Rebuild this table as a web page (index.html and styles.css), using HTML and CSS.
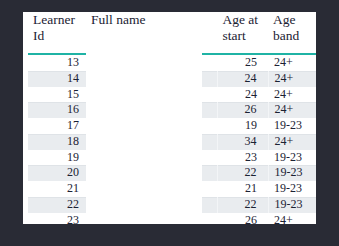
FILE: index.html
```html
<!DOCTYPE html>
<html>
<head>
<meta charset="utf-8">
<link rel="stylesheet" href="styles.css">
</head>
<body>
<div class="panel">
  <table class="grid">
    <colgroup>
      <col class="c-id"><col class="c-name"><col class="c-gap"><col class="c-age"><col class="c-band">
    </colgroup>
    <thead>
      <tr>
        <th class="h">Learner Id</th>
        <th class="h plain">Full name</th>
        <th class="h gap"></th>
        <th class="h">Age at start</th>
        <th class="h">Age band</th>
      </tr>
    </thead>
    <tbody>
      <tr><td class="id">13</td><td class="plain"></td><td class="gap"></td><td class="age">25</td><td class="band">24+</td></tr>
      <tr class="alt"><td class="id">14</td><td class="plain"></td><td class="gap"></td><td class="age">24</td><td class="band">24+</td></tr>
      <tr><td class="id">15</td><td class="plain"></td><td class="gap"></td><td class="age">24</td><td class="band">24+</td></tr>
      <tr class="alt"><td class="id">16</td><td class="plain"></td><td class="gap"></td><td class="age">26</td><td class="band">24+</td></tr>
      <tr><td class="id">17</td><td class="plain"></td><td class="gap"></td><td class="age">19</td><td class="band">19-23</td></tr>
      <tr class="alt"><td class="id">18</td><td class="plain"></td><td class="gap"></td><td class="age">34</td><td class="band">24+</td></tr>
      <tr><td class="id">19</td><td class="plain"></td><td class="gap"></td><td class="age">23</td><td class="band">19-23</td></tr>
      <tr class="alt"><td class="id">20</td><td class="plain"></td><td class="gap"></td><td class="age">22</td><td class="band">19-23</td></tr>
      <tr><td class="id">21</td><td class="plain"></td><td class="gap"></td><td class="age">21</td><td class="band">19-23</td></tr>
      <tr class="alt"><td class="id">22</td><td class="plain"></td><td class="gap"></td><td class="age">22</td><td class="band">19-23</td></tr>
      <tr><td class="id">23</td><td class="plain"></td><td class="gap"></td><td class="age">26</td><td class="band">24+</td></tr>
    </tbody>
  </table>
</div>
</body>
</html>
```

FILE: styles.css
```css
html, body {
  margin: 0;
  padding: 0;
  background: #292b35;
}
body {
  padding: 12px 0 0 23px;
  height: 246px;
  box-sizing: border-box;
  overflow: hidden;
}
.panel {
  width: 293px;
  height: 212px;
  background: #ffffff;
  overflow: hidden;
  padding-left: 5px;
  box-sizing: border-box;
}
.grid {
  border-collapse: collapse;
  table-layout: fixed;
  width: 300px;
  font-family: "Liberation Serif", "Times New Roman", serif;
  color: #1b2233;
}
.c-id { width: 58px; }
.c-name { width: 116px; }
.c-gap { width: 15px; }
.c-age { width: 51px; }
.c-band { width: 60px; }

.h {
  font-size: 13.5px;
  line-height: 16px;
  font-weight: normal;
  text-align: left;
  vertical-align: top;
  padding: 0 4px 9px 5px;
  border-bottom: 2px solid #1fb3a5;
}
.h.plain { border-bottom-color: transparent; }

td {
  font-size: 12px;
  line-height: 15.75px;
  height: 15.75px;
  padding: 0 5px;
  white-space: nowrap;
}
.id { text-align: right; padding-right: 7px; }
.age { text-align: right; padding-right: 11px; }
.band { text-align: left; padding-left: 6px; }
.gap { border-right: 1px solid transparent; }

.alt td {
  background: #e9ecef;
  box-shadow: inset 0 1px 0 #dfe3e7;
}
.alt td.plain {
  background: transparent;
  box-shadow: none;
}
.alt td.gap { border-right-color: #f3f5f7; }
.alt td.age { border-right: 1px solid #f3f5f7; }
```
